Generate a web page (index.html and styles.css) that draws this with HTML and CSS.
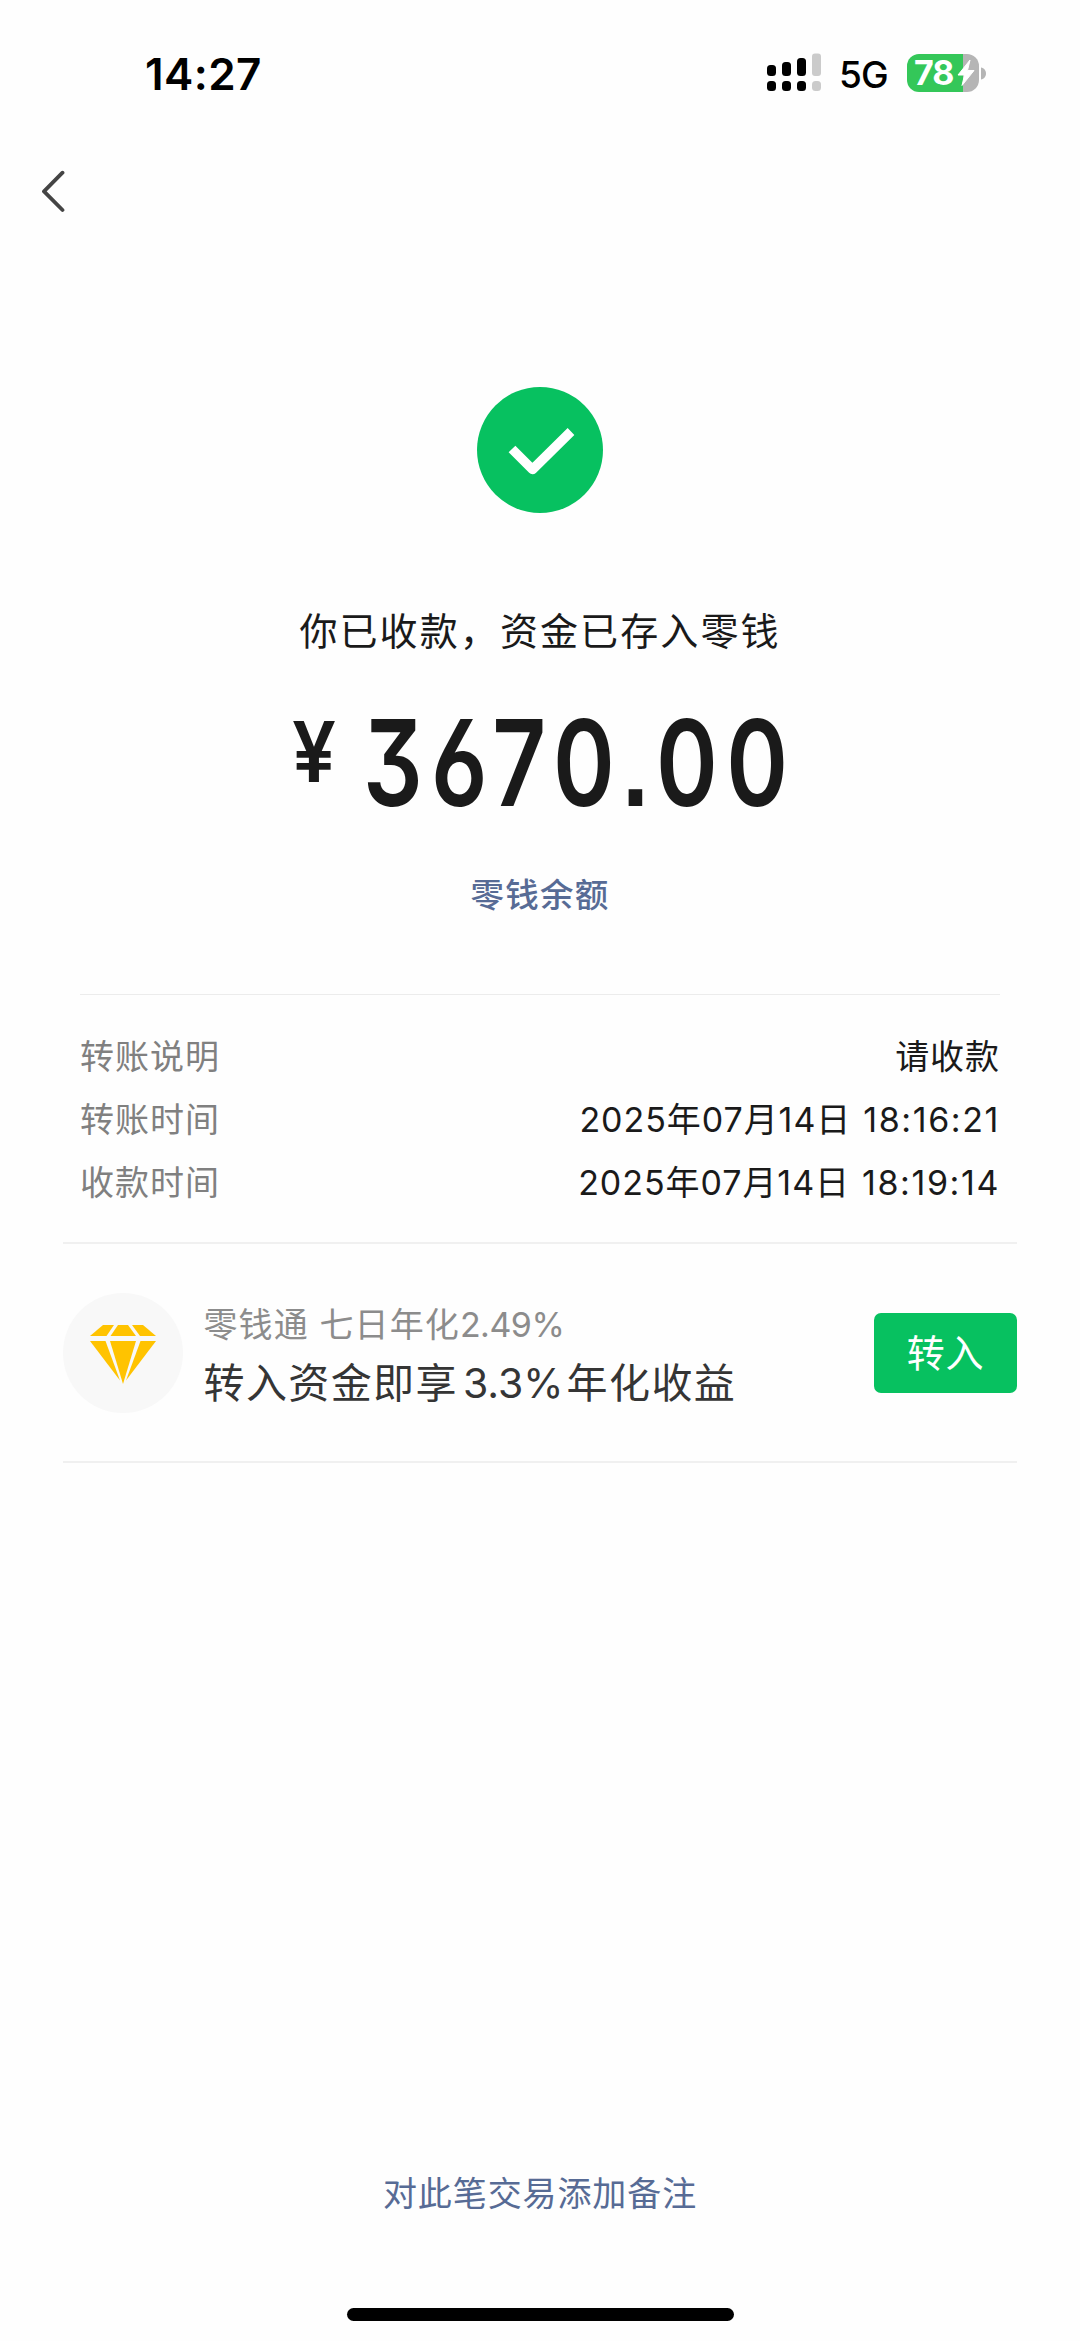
FILE: index.html
```html
<!DOCTYPE html>
<html lang="zh-CN">
<head>
<meta charset="utf-8">
<title>收款详情</title>
<link rel="stylesheet" href="styles.css">
</head>
<body>
<div class="screen">
  <header class="status">
    <span class="clock">14:27</span>
    <div class="status-right">
      <svg class="signal" width="56" height="40" viewBox="0 0 56 40">
        <g fill="#000">
          <rect x="1" y="12" width="9" height="11" rx="3.5"/><rect x="16" y="9" width="9" height="14" rx="3.5"/><rect x="31" y="5" width="9" height="18" rx="3.5"/>
          <rect x="1" y="28" width="9" height="10" rx="3.5"/><rect x="16" y="28" width="9" height="10" rx="3.5"/><rect x="31" y="28" width="9" height="10" rx="3.5"/>
        </g>
        <g fill="#cbcbcb"><rect x="46" y="0.5" width="9" height="22.5" rx="3"/><rect x="46" y="28" width="9" height="10" rx="3.5"/></g>
      </svg>
      <span class="network">5G</span>
      <div class="battery">
        <span class="level">78</span>
        <svg class="bolt" width="18" height="28" viewBox="0 0 18 28"><path d="M13 1L1 16H7.5L5 26.5L17 11.5H10.5Z" fill="#fff" stroke="#fff" stroke-width="1" stroke-linejoin="round"/></svg>
      </div>
      <svg class="nub" width="5" height="13" viewBox="0 0 5 13"><path d="M0 0.5C3 1 5 3.500 5 6.500S3 12 0 12.500Z" fill="#b5b5b5"/></svg>
    </div>
  </header>

  <nav class="nav">
    <svg width="24" height="46" viewBox="0 0 24 46"><path d="M21.500 4.700L3 23.400L21.500 42" fill="none" stroke="#444" stroke-width="3.800" stroke-linecap="round" stroke-linejoin="round"/></svg>
  </nav>

  <main>
    <section class="result">
      <svg class="check" width="126" height="126" viewBox="0 0 126 126"><circle cx="63" cy="63" r="63" fill="#07c160"/><path d="M35 62L55.500 82.500L94 44.500" fill="none" stroke="#fff" stroke-width="9.500" stroke-linejoin="round"/></svg>
      <p class="message">你已收款，资金已存入零钱</p>
      <p class="amount"><span class="yen">¥</span><span class="digits">3670.00</span></p>
      <a class="balance">零钱余额</a>
    </section>

    <dl class="details">
      <div class="row"><dt>转账说明</dt><dd>请收款</dd></div>
      <div class="row"><dt>转账时间</dt><dd>2025年07月14日 <span class="time">18:16:21</span></dd></div>
      <div class="row"><dt>收款时间</dt><dd>2025年07月14日 <span class="time">18:19:14</span></dd></div>
    </dl>

    <section class="promo">
      <div class="gem">
        <svg width="68" height="62" viewBox="0 0 68 62"><g fill="#ffc300"><path d="M14 1H25L17.500 12H1Z"/><path d="M29 1H39L47 12H21.500Z"/><path d="M43 1H54L67 12H51Z"/><path d="M1 17H16.500L31 56.500Z"/><path d="M21 17H47L34 60Z"/><path d="M51.500 17H67L37 56.500Z"/></g></svg>
      </div>
      <div class="promo-text">
        <p class="promo-sub">零钱通 七日年化<span class="yield">2.49%</span></p>
        <p class="promo-title">转入资金即享<span class="rate">3.3%</span>年化收益</p>
      </div>
      <button class="transfer">转入</button>
    </section>
  </main>

  <footer>
    <a class="remark">对此笔交易添加备注</a>
    <div class="home"></div>
  </footer>
</div>
</body>
</html>
```
FILE: styles.css
```css
* { box-sizing: border-box; margin: 0; padding: 0; }

body {
  background: #fefefe;
  color: #1a1a1a;
  font-family: Inter, "Noto Sans CJK SC", sans-serif;
  font-feature-settings: "calt" 0;
}

.screen {
  width: 1080px;
  height: 2341px;
  display: flex;
  flex-direction: column;
  overflow: hidden;
}

/* Status bar */
.status {
  height: 146px;
  flex: none;
  padding: 0 94px 0 145px;
  display: flex;
  justify-content: space-between;
  align-items: center;
  color: #000;
}
.clock { font-size: 44px; font-weight: 600; letter-spacing: 0.4px; padding-top: 1px; }
.status-right { display: flex; align-items: center; }
.signal { margin-right: 17px; }
.network { width: 48px; font-size: 37px; font-weight: 500; letter-spacing: -0.8px; margin-right: 20px; line-height: 40px; padding-top: 3px; }
.battery {
  width: 72px;
  height: 38px;
  border-radius: 12px;
  background: linear-gradient(to right, #34c759 56px, #b5b5b5 56px);
  display: flex;
  align-items: center;
  padding-left: 7px;
}
.level { width: 43px; font-size: 34px; line-height: 38px; font-weight: 700; letter-spacing: -1px; color: #fff; }
.nub { margin: 1px 0 0 2px; }

.nav { height: 90px; flex: none; padding: 22px 0 0 41px; }
.nav svg { display: block; }

/* Result */
.result { display: flex; flex-direction: column; align-items: center; padding-top: 150.5px; height: 758px; }
.check { display: block; flex: none; }
.message { margin-top: 93.5px; height: 50px; font-size: 38px; line-height: 50px; letter-spacing: 2.1px; white-space: nowrap; }
.amount { width: 496px; height: 120px; margin-top: 47px; display: flex; font-weight: 600; line-height: 120px; white-space: nowrap; }
.yen { flex: none; width: 71px; font-size: 84px; line-height: 97px; transform: scaleX(0.93); transform-origin: left; }
.digits { flex: none; font-size: 120px; letter-spacing: 10.7px; font-feature-settings: "calt" 0, "cv03", "cv09", "ss07"; transform: scaleX(0.78); transform-origin: left; }
.balance { margin-top: 46.5px; font-size: 33.5px; line-height: 50px; letter-spacing: 1.3px; font-weight: 500; color: #576b95; }

/* Details */
.details { margin: 0 80px; height: 248px; padding-top: 30px; border-top: 1px solid #ececec; font-size: 34px; letter-spacing: 0.95px; }
.row { display: flex; justify-content: space-between; height: 63px; line-height: 63px; white-space: nowrap; }
dt { color: #808080; letter-spacing: 1px; }
dd { word-spacing: 1.5px; }
.time { letter-spacing: 1.6px; }

/* Promo */
.promo {
  margin: 0 63px;
  height: 221px;
  border-top: 2px solid #f0f0f0;
  border-bottom: 2px solid #f0f0f0;
  display: flex;
  align-items: center;
}
.gem { width: 120px; height: 120px; border-radius: 50%; background: #f8f8f8; display: flex; align-items: center; justify-content: center; padding-top: 5px; }
.promo-text { margin-left: 20.5px; padding-top: 5px; flex: 1; white-space: nowrap; }
.promo-sub { font-size: 34px; line-height: 56px; color: #8c8c8c; letter-spacing: 1.1px; }
.yield { letter-spacing: -0.5px; }
.promo-title { font-size: 41px; line-height: 61px; color: #353535; letter-spacing: 1.4px; }
.rate { margin: 0 3px 0 5px; letter-spacing: 0; }
.transfer { width: 143px; height: 80px; border: 0; border-radius: 7px; background: #07c160; color: #fff; font: 38px/80px Inter, "Noto Sans CJK SC", sans-serif; letter-spacing: 0.8px; }

footer { margin-top: auto; height: 172px; display: flex; flex-direction: column; align-items: center; }
.remark { line-height: 50px; font-size: 34px; letter-spacing: 0.9px; color: #576b95; }
.home { width: 387px; height: 13px; border-radius: 7px; background: #000; margin-top: 89px; }
```
